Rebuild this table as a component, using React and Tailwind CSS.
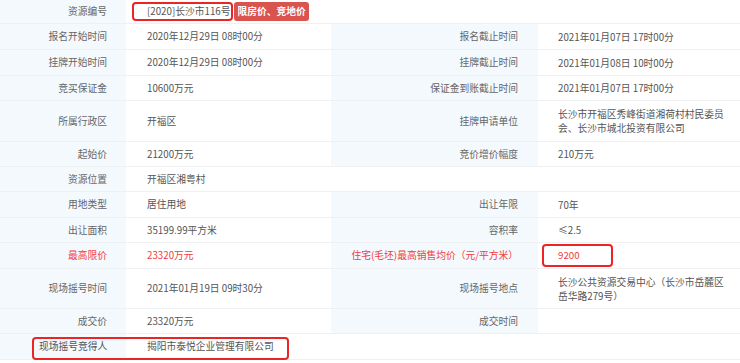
import React from "react";

// one row = [label, value, label2, value2], heights measured from the grid lines
const rows = [
  { h: "h-[24px]", label: "资源编号", value: "code", label2: "", value2: "" },
  { h: "h-[26px]", label: "报名开始时间", value: "2020年12月29日 08时00分", label2: "报名截止时间", value2: "2021年01月07日 17时00分" },
  { h: "h-[26px]", label: "挂牌开始时间", value: "2020年12月29日 08时00分", label2: "挂牌截止时间", value2: "2021年01月08日 10时00分" },
  { h: "h-[25px]", label: "竞买保证金", value: "10600万元", label2: "保证金到账截止时间", value2: "2021年01月07日 17时00分" },
  { h: "h-[41px]", label: "所属行政区", value: "开福区", label2: "挂牌申请单位", value2: "长沙市开福区秀峰街道湘荷村村民委员会、长沙市城北投资有限公司" },
  { h: "h-[25px]", label: "起始价", value: "21200万元", label2: "竞价增价幅度", value2: "210万元" },
  { h: "h-[25px]", label: "资源位置", value: "开福区湘粤村", span: true },
  { h: "h-[26px]", label: "用地类型", value: "居住用地", label2: "出让年限", value2: "70年" },
  { h: "h-[25px]", label: "出让面积", value: "35199.99平方米", label2: "容积率", value2: "≤2.5" },
  { h: "h-[26px]", label: "最高限价", value: "23320万元", label2: "住宅(毛坯)最高销售均价（元/平方米）", value2: "9200", red: true },
  { h: "h-[40px]", label: "现场摇号时间", value: "2021年01月19日 09时30分", label2: "现场摇号地点", value2: "长沙公共资源交易中心（长沙市岳麓区岳华路279号）" },
  { h: "h-[25px]", label: "成交价", value: "23320万元", label2: "成交时间", value2: "" },
];

function Row({ row }) {
  const labelColor = row.red ? "text-[#f23b3b]" : "text-[#666]";
  const valueColor = row.red ? "text-[#f23b3b]" : "text-[#555]";
  return (
    <div className={`grid grid-cols-[126px_205px_207px_202px] border-b border-[#eef0f2] ${row.h}`}>
      <div className={`flex items-center justify-end bg-[#f4f9fe] pr-[19px] ${labelColor}`}>{row.label}</div>
      {row.value === "code" ? (
        <div className="flex items-center pl-[6px]">
          <span className="flex h-[19px] items-center rounded-[4px] border-2 border-[#ec2424] pl-[13px] pr-[1px] text-[#555]">
            [2020]长沙市116号
          </span>
          <span className="ml-[1px] flex h-[19px] items-center rounded-[3px] bg-[#d9534f] px-[3px] font-bold text-white">
            限房价、竞地价
          </span>
        </div>
      ) : (
        <div className={`flex items-center pl-[21px] ${valueColor} ${row.span ? "col-span-3" : ""}`}>{row.value}</div>
      )}
      {!row.span && (
        <>
          <div className={`flex items-center justify-end bg-[#f4f9fe] pr-[20px] ${labelColor} ${row.value === "code" ? "bg-white" : ""}`}>
            {row.label2}
          </div>
          {row.red ? (
            <div className="flex items-center pl-[4px]">
              <span className="flex h-[23px] w-[71px] items-center rounded-[4px] border-2 border-[#ec2424] pl-[14px] text-[#f23b3b]">
                {row.value2}
              </span>
            </div>
          ) : (
            <div className="flex items-center pl-[20px] pr-[14px] leading-[14px] text-[#555]">{row.value2}</div>
          )}
        </>
      )}
    </div>
  );
}

export default function App() {
  return (
    <div
      className="h-[363px] w-[740px] overflow-hidden bg-white text-[9.75px]"
      style={{ fontFamily: '"Noto Sans CJK SC", "Microsoft YaHei", sans-serif' }}
    >
      {rows.map((row, i) => (
        <Row key={i} row={row} />
      ))}

      {/* winner row with the red annotation box over label + value */}
      <div className="relative grid h-[26px] grid-cols-[126px_614px] border-b border-[#eef0f2]">
        <div className="flex items-center bg-[#f4f9fe] pl-[39px] text-[#555]">现场摇号竞得人</div>
        <div className="flex items-center pl-[21px] text-[#555]">揭阳市泰悦企业管理有限公司</div>
        <div className="absolute left-[32px] top-[3px] h-[23px] w-[257px] rounded-[4px] border-2 border-[#ec2424]" />
      </div>
    </div>
  );
}
